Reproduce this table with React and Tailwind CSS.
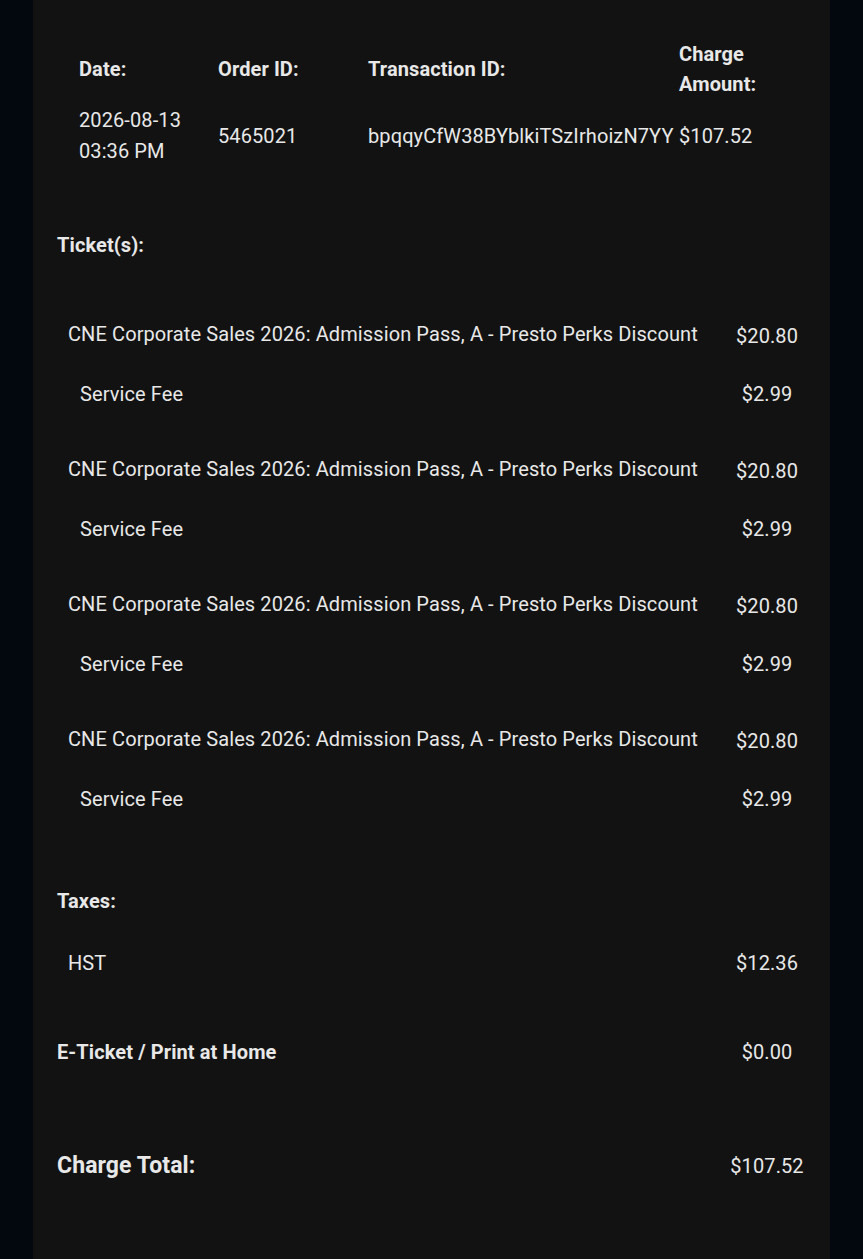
export default function App() {
  const items = [1, 2, 3, 4];
  const Price = ({ children, cls = "" }) => (
    <div className={`w-[120px] text-center ${cls}`}>{children}</div>
  );
  return (
    <div
      className="min-h-screen bg-[#03080f] pl-[33px] text-[#e8e8e8]"
      style={{ fontFamily: "Roboto, 'Noto Sans', sans-serif" }}
    >
      <div className="w-[797px] min-h-[1259px] bg-[#121212] text-[20px] leading-[30px] tracking-[0.1px]">
        {/* header table */}
        <div className="pt-[39px] pl-[46px] grid grid-cols-[139px_150px_311px_auto] gap-y-[6px] items-center">
          <div className="font-bold">Date:</div>
          <div className="font-bold">Order ID:</div>
          <div className="font-bold">Transaction ID:</div>
          <div className="font-bold">
            Charge
            <br />
            Amount:
          </div>
          <div className="leading-[31px]">
            2026-08-13
            <br />
            03:36 PM
          </div>
          <div>5465021</div>
          <div className="whitespace-nowrap">bpqqyCfW38BYblkiTSzIrhoizN7YY</div>
          <div>$107.52</div>
        </div>

        <div className="mt-[63px] pl-[24px] font-bold">Ticket(s):</div>

        <div className="mt-[59px]">
          {items.map((i) => (
            <div key={i} className={i > 1 ? "mt-[45px]" : ""}>
              <div className="flex items-center pl-[35px] pr-[3px]">
                <div className="flex-1 whitespace-nowrap">
                  CNE Corporate Sales 2026: Admission Pass, A - Presto Perks Discount
                </div>
                <Price cls="translate-y-[2px]">$20.80</Price>
              </div>
              <div className="mt-[30px] flex items-center pl-[47px] pr-[3px]">
                <div className="flex-1">Service Fee</div>
                <Price>$2.99</Price>
              </div>
            </div>
          ))}
        </div>

        <div className="mt-[72px] pl-[24px] font-bold">Taxes:</div>
        <div className="mt-[32px] flex items-center pl-[35px] pr-[3px]">
          <div className="flex-1">HST</div>
          <Price>$12.36</Price>
        </div>

        <div className="mt-[59px] flex items-center pl-[24px] pr-[3px]">
          <div className="flex-1 font-bold">E-Ticket / Print at Home</div>
          <Price>$0.00</Price>
        </div>

        <div className="mt-[84px] flex items-center pl-[24px] pr-[3px]">
          <div className="flex-1 font-bold text-[23px]">Charge Total:</div>
          <Price>$107.52</Price>
        </div>
      </div>
    </div>
  );
}
